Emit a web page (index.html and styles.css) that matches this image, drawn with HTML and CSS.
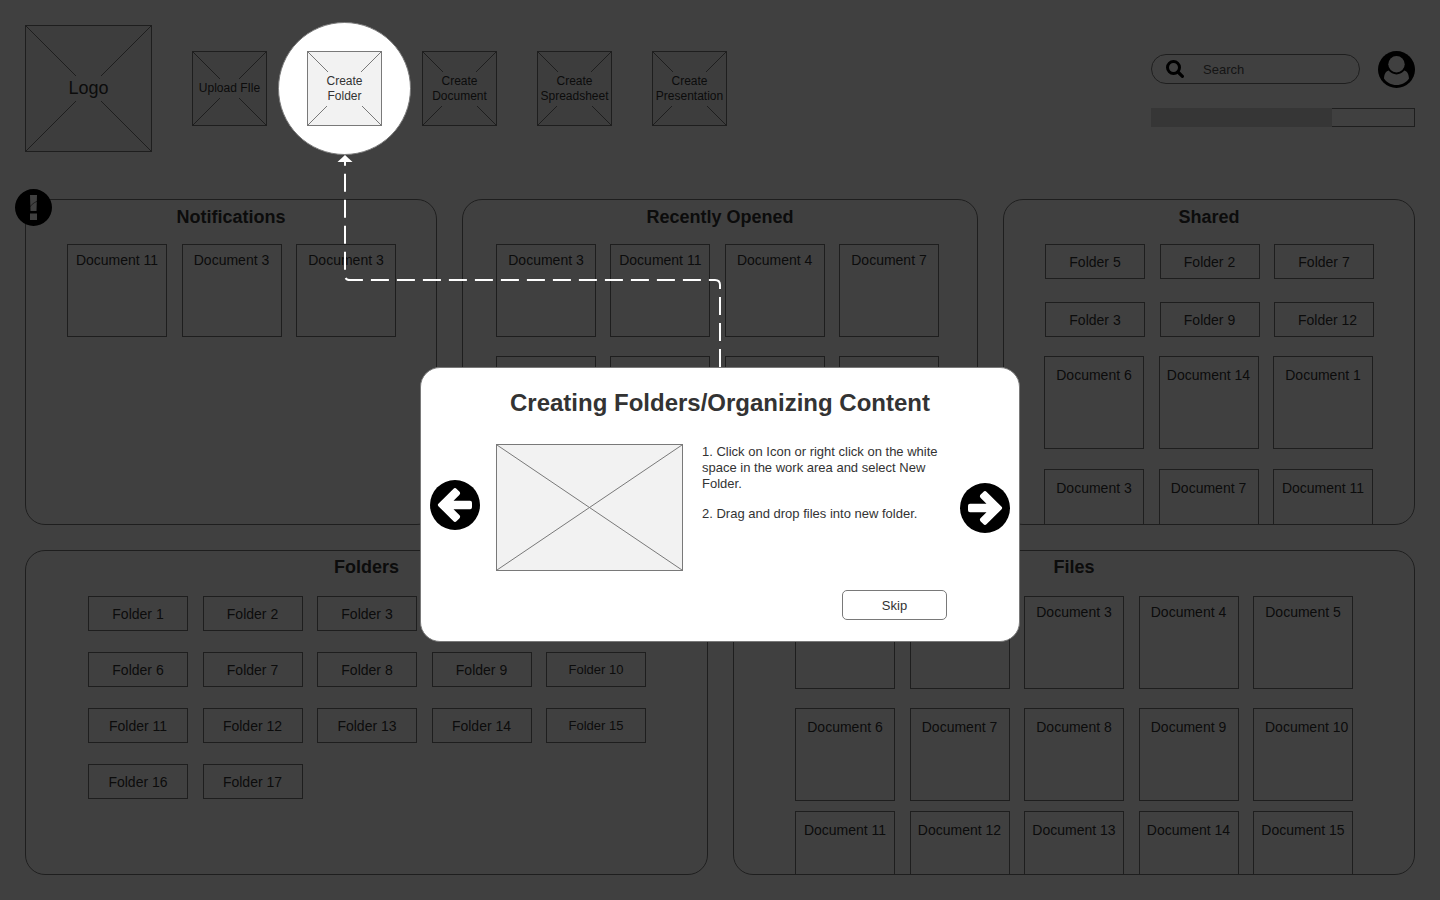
FILE: index.html
```html
<!DOCTYPE html>
<html lang="en">
<head>
<meta charset="utf-8">
<meta name="viewport" content="width=device-width, initial-scale=1">
<title>Creating Folders/Organizing Content</title>
<link rel="stylesheet" href="styles.css">
</head>
<body>
<div class="page">
  <header class="header">
    <a class="box box-logo" href="#">
      <svg class="cross" viewBox="0 0 100 100" preserveAspectRatio="none" aria-hidden="true"><path d="M0 0L100 100M100 0L0 100"/></svg>
      <span class="box-label">Logo</span>
    </a>
    <ul class="actions">
      <li><button class="box" type="button"><svg class="cross" viewBox="0 0 100 100" preserveAspectRatio="none" aria-hidden="true"><path d="M0 0L100 100M100 0L0 100"/></svg><span class="box-label">Upload FIle</span></button></li>
      <li class="spotlight"><button class="box" type="button"><svg class="cross" viewBox="0 0 100 100" preserveAspectRatio="none" aria-hidden="true"><path d="M0 0L100 100M100 0L0 100"/></svg><span class="box-label">Create<br>Folder</span></button></li>
      <li><button class="box" type="button"><svg class="cross" viewBox="0 0 100 100" preserveAspectRatio="none" aria-hidden="true"><path d="M0 0L100 100M100 0L0 100"/></svg><span class="box-label">Create<br>Document</span></button></li>
      <li><button class="box" type="button"><svg class="cross" viewBox="0 0 100 100" preserveAspectRatio="none" aria-hidden="true"><path d="M0 0L100 100M100 0L0 100"/></svg><span class="box-label">Create<br>Spreadsheet</span></button></li>
      <li><button class="box" type="button"><svg class="cross" viewBox="0 0 100 100" preserveAspectRatio="none" aria-hidden="true"><path d="M0 0L100 100M100 0L0 100"/></svg><span class="box-label">Create<br>Presentation</span></button></li>
    </ul>
    <div class="account">
      <div class="account-row">
        <label class="search">
          <svg width="18" height="18" viewBox="0 0 18 18" aria-hidden="true"><circle cx="7.5" cy="7.5" r="6" fill="none" stroke="#000" stroke-width="3"/><path d="M12 12L16.4 16.4" stroke="#000" stroke-width="3.2" stroke-linecap="round"/></svg>
          <input class="search-input" type="search" placeholder="Search" aria-label="Search">
        </label>
        <button class="icon-button" type="button" aria-label="Account">
          <svg width="37" height="37" viewBox="0 0 37 37" aria-hidden="true"><circle cx="18.5" cy="18.5" r="18.5"/><path fill="#fff" d="M10.6 19.6C7.6 20.4 6.3 23.6 6 27.4C8.6 31.3 13.2 34 18.5 34C23.8 34 28.4 31.3 31 27.4C30.7 23.6 29.4 20.4 26.4 19.6C24.5 22 21.7 23.4 18.5 23.4C15.300 23.400 12.500 22 10.600 19.600Z"/><circle cx="18.5" cy="13.3" r="8.2" fill="#fff"/></svg>
        </button>
      </div>
      <progress class="storage" max="264" value="181" aria-label="Storage used"></progress>
    </div>
  </header>

  <main class="panels">
    <div class="row row-top">
      <section class="panel">
        <svg class="badge" width="37" height="37" viewBox="0 0 37 37" role="img" aria-label="Alert"><path fill-rule="evenodd" d="M18.500 0A18.500 18.500 0 1 1 18.500 37A18.500 18.500 0 1 1 18.500 0ZM15 6L22 6L21.500 22L15.500 22ZM15 24.500L22 24.500L22 31L15 31Z"/></svg>
        <h2 class="panel-title">Notifications</h2>
        <div class="items cols-3">
          <button class="doc" type="button">Document 11</button>
          <button class="doc" type="button">Document 3</button>
          <button class="doc" type="button">Document 3</button>
        </div>
      </section>
      <section class="panel">
        <h2 class="panel-title">Recently Opened</h2>
        <div class="items cols-4">
          <button class="doc" type="button">Document 3</button>
          <button class="doc" type="button">Document 11</button>
          <button class="doc" type="button">Document 4</button>
          <button class="doc" type="button">Document 7</button>
          <button class="doc" type="button">Document 8</button>
          <button class="doc" type="button">Document 2</button>
          <button class="doc" type="button">Document 9</button>
          <button class="doc" type="button">Document 6</button>
        </div>
      </section>
      <section class="panel panel-clip">
        <h2 class="panel-title">Shared</h2>
        <div class="items cols-3 items-shared">
          <button class="folder" type="button">Folder 5</button>
          <button class="folder" type="button">Folder 2</button>
          <button class="folder" type="button">Folder 7</button>
          <button class="folder" type="button">Folder 3</button>
          <button class="folder" type="button">Folder 9</button>
          <button class="folder folder-start" type="button">Folder 12</button>
        </div>
        <div class="items cols-3 items-next">
          <button class="doc doc-low" type="button">Document 6</button>
          <button class="doc doc-low" type="button">Document 14</button>
          <button class="doc doc-low" type="button">Document 1</button>
          <button class="doc doc-low" type="button">Document 3</button>
          <button class="doc doc-low" type="button">Document 7</button>
          <button class="doc doc-low" type="button">Document 11</button>
        </div>
      </section>
    </div>

    <div class="row row-bottom">
      <section class="panel panel-wide">
        <h2 class="panel-title">Folders</h2>
        <div class="items cols-5 items-folders">
          <button class="folder" type="button">Folder 1</button>
          <button class="folder" type="button">Folder 2</button>
          <button class="folder" type="button">Folder 3</button>
          <button class="folder" type="button">Folder 4</button>
          <button class="folder" type="button">Folder 5</button>
          <button class="folder" type="button">Folder 6</button>
          <button class="folder" type="button">Folder 7</button>
          <button class="folder" type="button">Folder 8</button>
          <button class="folder" type="button">Folder 9</button>
          <button class="folder folder-small" type="button">Folder 10</button>
          <button class="folder" type="button">Folder 11</button>
          <button class="folder" type="button">Folder 12</button>
          <button class="folder" type="button">Folder 13</button>
          <button class="folder" type="button">Folder 14</button>
          <button class="folder folder-small" type="button">Folder 15</button>
          <button class="folder" type="button">Folder 16</button>
          <button class="folder" type="button">Folder 17</button>
        </div>
      </section>
      <section class="panel panel-wide panel-clip">
        <h2 class="panel-title">Files</h2>
        <div class="items cols-5">
          <button class="doc" type="button">Document 1</button>
          <button class="doc" type="button">Document 2</button>
          <button class="doc" type="button">Document 3</button>
          <button class="doc" type="button">Document 4</button>
          <button class="doc" type="button">Document 5</button>
          <button class="doc doc-low" type="button">Document 6</button>
          <button class="doc doc-low" type="button">Document 7</button>
          <button class="doc doc-low" type="button">Document 8</button>
          <button class="doc doc-low" type="button">Document 9</button>
          <button class="doc doc-low doc-start" type="button">Document 10</button>
        </div>
        <div class="items cols-5 items-close">
          <button class="doc doc-low" type="button">Document 11</button>
          <button class="doc doc-low" type="button">Document 12</button>
          <button class="doc doc-low" type="button">Document 13</button>
          <button class="doc doc-low" type="button">Document 14</button>
          <button class="doc doc-low" type="button">Document 15</button>
        </div>
      </section>
    </div>
  </main>
</div>

<div class="overlay">
  <svg class="connector" width="384" height="212" viewBox="0 0 384 212" aria-hidden="true">
    <path d="M383 212V130Q383 125 378 125H13Q8 125 8 120V6" fill="none" stroke="#fff" stroke-width="2" stroke-dasharray="18 8"/>
    <path d="M8 0L15.500 7H0.500Z" fill="#fff"/>
  </svg>
  <div class="dialog" role="dialog" aria-labelledby="dialog-title">
    <h1 class="dialog-title" id="dialog-title">Creating Folders/Organizing Content</h1>
    <div class="dialog-body">
      <button class="icon-button prev" type="button" aria-label="Previous">
        <svg width="50" height="50" viewBox="0 0 50 50" aria-hidden="true"><circle cx="25" cy="25" r="25"/><path fill="#fff" d="M8.400 23.800L23.300 8.900Q25 7.200 26.700 8.900L29.300 11.500Q31 13.200 29.300 14.900L23.500 20.800H40Q42 20.800 42 22.800V27.200Q42 29.200 40 29.200H23.500L29.300 35.100Q31 36.800 29.300 38.500L26.700 41.100Q25 42.800 23.300 41.100L8.400 26.200Q7.300 25 8.400 23.800Z"/></svg>
      </button>
      <div class="picture" role="img" aria-label="Illustration">
        <svg class="cross" viewBox="0 0 100 100" preserveAspectRatio="none" aria-hidden="true"><path d="M0 0L100 100M100 0L0 100"/></svg>
      </div>
      <div class="steps">
        <p>1. Click on Icon or right click on the white space in the work area and select New Folder.</p>
        <p>2. Drag and drop files into new folder.</p>
      </div>
      <button class="icon-button next" type="button" aria-label="Next">
        <svg width="50" height="50" viewBox="0 0 50 50" aria-hidden="true"><circle cx="25" cy="25" r="25"/><path fill="#fff" d="M41.600 23.800L26.700 8.900Q25 7.200 23.300 8.900L20.700 11.500Q19 13.200 20.700 14.900L26.500 20.800H10Q8 20.800 8 22.800V27.200Q8 29.200 10 29.200H26.500L20.700 35.100Q19 36.800 20.700 38.500L23.300 41.100Q25 42.800 26.700 41.100L41.600 26.200Q42.700 25 41.600 23.800Z"/></svg>
      </button>
    </div>
    <button class="skip" type="button">Skip</button>
  </div>
</div>
</body>
</html>
```

FILE: styles.css
```css
*, *::before, *::after { box-sizing: border-box; }

body {
  margin: 0;
  background: #fff;
  color: #333;
  font: 14px/16px "Liberation Sans", Arial, sans-serif;
}

button, input { font: inherit; color: inherit; }
button { cursor: pointer; padding: 0; }
ul, h1, h2, p { margin: 0; padding: 0; }
ul { list-style: none; }
svg { display: block; }

.page {
  display: flex;
  flex-direction: column;
  height: 100vh;
  padding: 25px;
}

/* Header */
.header {
  display: flex;
  align-items: center;
  gap: 40px;
  margin-bottom: 47px;
}

.box {
  display: grid;
  grid-template: 100% / 100%;
  align-items: center;
  width: 75px;
  height: 75px;
  border: 1px solid #797979;
  background: #f2f2f2;
  color: #333;
  font-size: 12px;
  line-height: 15px;
  text-align: center;
  text-decoration: none;
}

.box > * { grid-area: 1 / 1; }

.box-label {
  padding: 2px 0;
  background: #f2f2f2;
}

.box-logo {
  width: 127px;
  height: 127px;
  font-size: 18px;
  line-height: 21px;
}

.cross { width: 100%; height: 100%; }

.cross path {
  fill: none;
  stroke: #797979;
  stroke-width: 1px;
  vector-effect: non-scaling-stroke;
}

.actions { display: flex; gap: 40px; }

.spotlight { position: relative; z-index: 2; }

.spotlight::before {
  content: "";
  position: absolute;
  z-index: -1;
  inset: -29px;
  border: 1px solid #797979;
  border-radius: 50%;
  background: #fff;
}

.account {
  display: flex;
  flex-direction: column;
  gap: 20px;
  width: 264px;
  margin-left: auto;
}

.account-row { display: flex; align-items: center; gap: 18px; }

.search {
  display: flex;
  flex: 1;
  align-items: center;
  gap: 19px;
  min-width: 0;
  height: 30px;
  padding: 0 14px;
  border: 1px solid #797979;
  border-radius: 15px;
}

.search-input {
  flex: 1;
  min-width: 0;
  padding: 2px 0 0;
  border: 0;
  outline: 0;
  background: none;
  font-size: 13px;
}

.search-input::placeholder { color: #555; }

.icon-button { flex: none; border: 0; background: none; }

.storage {
  display: block;
  width: 100%;
  height: 19px;
  appearance: none;
}

.storage::-webkit-progress-bar {
  background: #fff;
  box-shadow: inset 0 0 0 1px #797979;
}

.storage::-webkit-progress-value { background: #d7d7d7; }

/* Panels */
.panels {
  display: grid;
  flex: 1;
  grid-template-rows: minmax(0, 326fr) minmax(0, 325fr);
  gap: 25px;
  min-height: 0;
}

.row { display: grid; gap: 25px; }
.row-top { grid-template-columns: 412fr 516fr 412fr; }
.row-bottom { grid-template-columns: 683fr 682fr; }

.panel {
  position: relative;
  min-height: 0;
  padding-top: 7px;
  border: 1px solid #797979;
  border-radius: 20px;
}

.panel-clip { overflow: hidden; }

.badge { position: absolute; top: -11px; left: -11px; }

.panel-title {
  margin-bottom: 17px;
  font-size: 18px;
  line-height: 20px;
  text-align: center;
}

.panel-wide { padding-top: 6px; }
.panel-wide .panel-title { margin-bottom: 19px; }

.items {
  display: grid;
  justify-content: space-between;
  row-gap: 19px;
}

.cols-3 { grid-template-columns: repeat(3, 100px); padding: 0 40px 0 41px; }
.cols-4 { grid-template-columns: repeat(4, 100px); padding: 0 38px 0 33px; }
.cols-5 { grid-template-columns: repeat(5, 100px); padding: 0 61px; }

.items-shared { row-gap: 23px; }
.items-folders { row-gap: 21px; padding-left: 62px; }
.items-next { row-gap: 20px; margin-top: 19px; padding: 0 41px 0 40px; }
.items-close { margin-top: 10px; }

.doc, .folder {
  display: flex;
  justify-content: center;
  border: 1px solid #797979;
  background: none;
  white-space: nowrap;
}

.doc { align-items: flex-start; height: 93px; padding-top: 7px; }
.doc-low { padding-top: 10px; }
.doc-start { justify-content: flex-start; padding-left: 11px; }

.folder { align-items: center; height: 35px; }
.folder-start { justify-content: flex-start; padding-left: 23px; }
.folder-small { font-size: 13px; }

/* Tour overlay */
.overlay {
  position: fixed;
  z-index: 1;
  inset: 0;
  padding-top: 367px;
  background: rgba(0, 0, 0, 0.75);
}

.connector { position: absolute; top: 155px; left: 337px; }

.dialog {
  position: relative;
  display: flex;
  flex-direction: column;
  width: 600px;
  max-width: 100%;
  margin: 0 auto;
  padding: 21px 9px;
  border: 1px solid #797979;
  border-radius: 20px;
  background: #fff;
}

.dialog-title {
  margin-bottom: 27px;
  font-size: 24px;
  line-height: 28px;
  text-align: center;
}

.dialog-body { display: flex; align-items: flex-start; }

.prev { margin-top: 36px; }
.next { margin-top: 39px; }

.picture {
  width: 187px;
  height: 127px;
  margin: 0 19px 0 16px;
  border: 1px solid #797979;
  background: #f2f2f2;
}

.steps {
  display: flex;
  flex: 1;
  flex-direction: column;
  gap: 14px;
  padding-right: 12px;
  font-size: 13px;
}

.skip {
  align-self: flex-end;
  width: 105px;
  height: 30px;
  margin: 19px 63px 0 0;
  padding-top: 2px;
  border: 1px solid #797979;
  border-radius: 5px;
  background: #fff;
  font-size: 13px;
}
```
